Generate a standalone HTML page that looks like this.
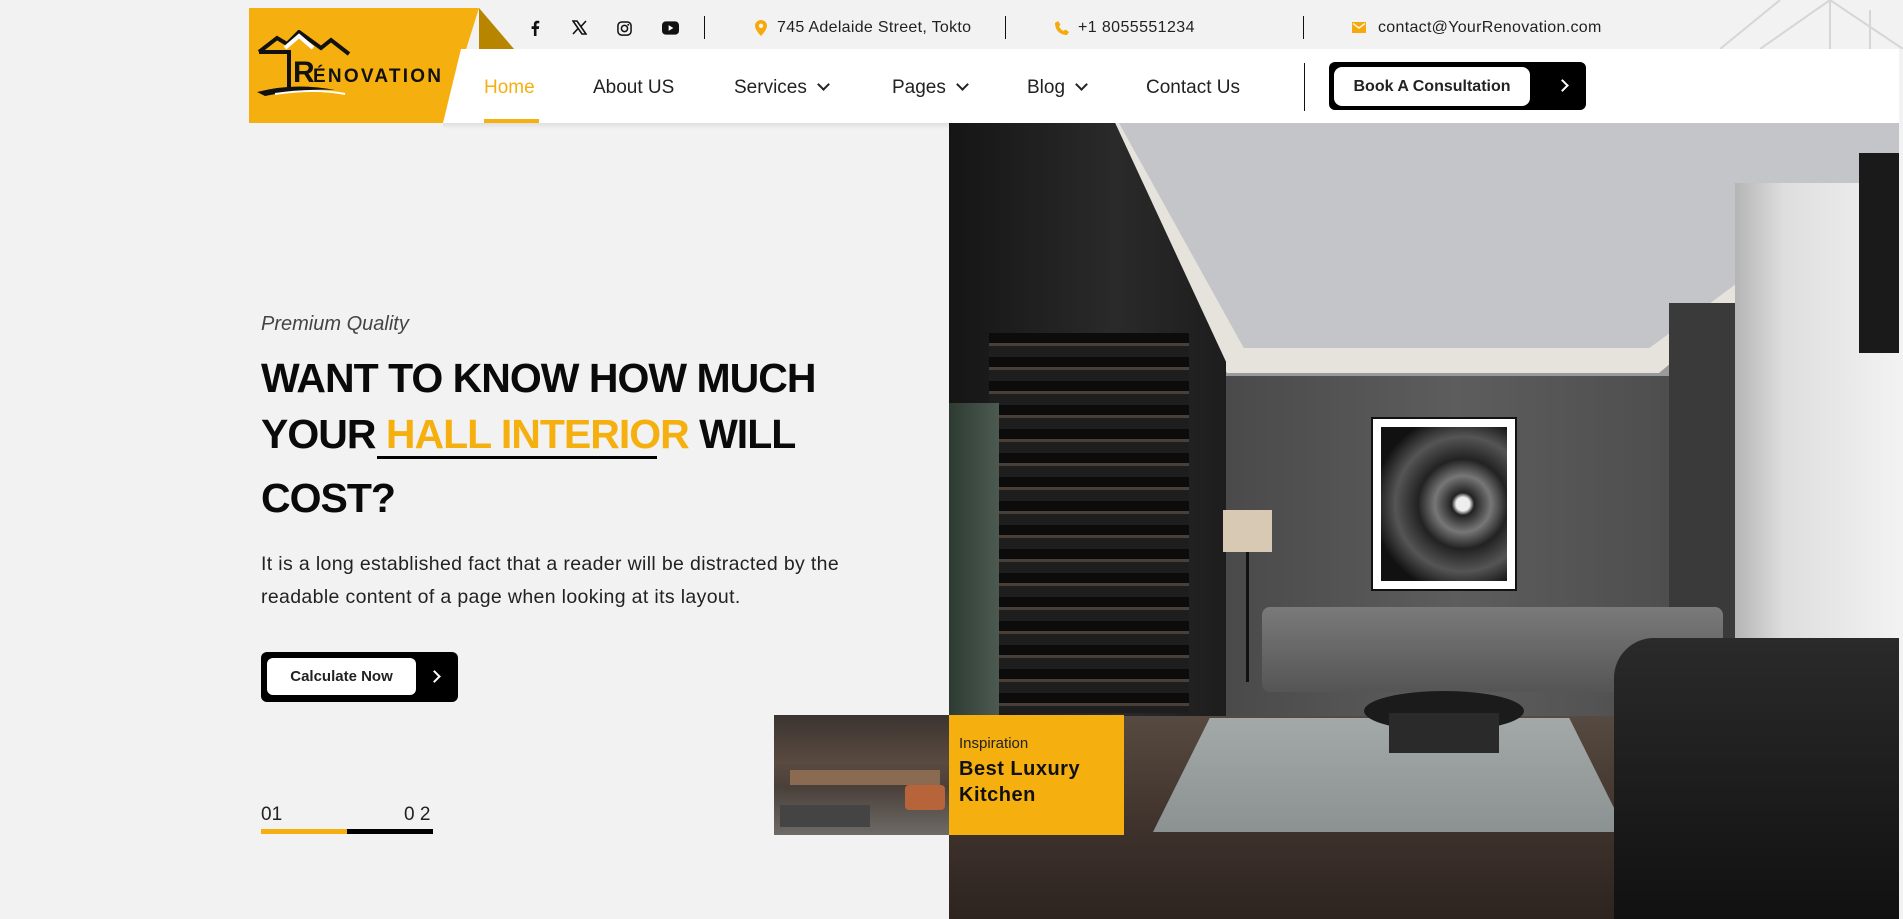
<!DOCTYPE html>
<html><head><meta charset="utf-8"><style>
*{margin:0;padding:0;box-sizing:border-box}
body{width:1903px;height:919px;overflow:hidden;background:#f2f2f2;font-family:"Liberation Sans",sans-serif;position:relative;color:#111}
.a{position:absolute}
.top{font-size:16px;color:#222;top:19px}
.nav{font-size:19px;color:#222;top:77px}
.chev{display:inline-block;width:9px;height:9px;border-right:2px solid #222;border-bottom:2px solid #222;transform:rotate(45deg);margin-left:12px;position:relative;top:-4px}
h1{font-size:41px;font-weight:bold;letter-spacing:-1px;line-height:56px;color:#0a0a0a}
</style></head><body>
<!-- logo -->
<div class="a" style="left:249px;top:8px;width:265px;height:115px;background:#f5b00f;clip-path:polygon(0 0,230px 0,194px 115px,0 115px)"></div>
<div class="a" style="left:479px;top:8px;width:35px;height:41px;background:#b88500;clip-path:polygon(0 0,100% 100%,0 100%)"></div>
<svg class="a" style="left:255px;top:30px" width="200" height="70" viewBox="0 0 200 70">
<path d="M4 22 L22 8 L32 14 L44 2 L66 18 L76 10 L94 24" fill="none" stroke="#111" stroke-width="4"/>
<path d="M30 18 L44 6 L58 18" fill="none" stroke="#fff" stroke-width="4"/>
<path d="M4 22 L34 22 L34 58" fill="none" stroke="#111" stroke-width="4"/>
<path d="M2 62 Q40 52 80 60 Q50 58 10 66 Z" fill="#111"/>
<path d="M20 64 Q60 58 90 64" fill="none" stroke="#fff" stroke-width="2"/>
<text x="38" y="52" font-family="Liberation Sans" font-weight="bold" font-size="30" fill="#111">R</text>
<text x="58" y="52" font-family="Liberation Sans" font-weight="bold" font-size="19" fill="#111" textLength="128">ÉNOVATION</text>
</svg>
<!-- top bar -->
<svg class="a" style="left:528px;top:20px" width="14" height="16" viewBox="0 0 10 16"><path d="M6.5 16V9h2.3l.4-2.7H6.5V4.6c0-.8.3-1.3 1.4-1.3h1.4V.9C9 .8 8.2.7 7.3.7 5.3.7 3.9 1.9 3.9 4.1v2.2H1.6V9h2.3v7z" fill="#111"/></svg>
<svg class="a" style="left:572px;top:20px" width="15" height="15" viewBox="0 0 15 15"><path d="M1 1h4l9 13h-4zM14 1L8.5 7M1 14l5.5-6" stroke="#111" stroke-width="1.6" fill="none"/></svg>
<svg class="a" style="left:617px;top:21px" width="15" height="15" viewBox="0 0 16 16"><rect x="1" y="1" width="14" height="14" rx="4" fill="none" stroke="#111" stroke-width="1.6"/><circle cx="8" cy="8" r="3.3" fill="none" stroke="#111" stroke-width="1.6"/><circle cx="12" cy="4" r="1" fill="#111"/></svg>
<svg class="a" style="left:662px;top:21px" width="17" height="14" viewBox="0 0 18 14"><rect width="18" height="14" rx="4" fill="#111"/><path d="M7 4v6l5-3z" fill="#fff"/></svg>
<div class="a" style="left:704px;top:16px;width:1px;height:23px;background:#111"></div>
<svg class="a" style="left:755px;top:20px" width="12" height="16" viewBox="0 0 12 16"><path d="M6 0C2.7 0 0 2.6 0 5.8 0 10 6 16 6 16s6-6 6-10.2C12 2.6 9.3 0 6 0zm0 8a2.2 2.2 0 110-4.4A2.2 2.2 0 016 8z" fill="#f5a90c"/></svg>
<div class="a top" style="left:777px;letter-spacing:.3px">745 Adelaide Street, Tokto</div>
<div class="a" style="left:1005px;top:16px;width:1px;height:23px;background:#111"></div>
<svg class="a" style="left:1055px;top:21px" width="14" height="14" viewBox="0 0 14 14"><path d="M3 0l2.5 3.5-1.5 2c1 2 2.5 3.5 4.5 4.5l2-1.5L14 11l-2 3C5 14 0 9 0 2z" fill="#f5a90c"/></svg>
<div class="a top" style="left:1078px;letter-spacing:.4px">+1 8055551234</div>
<div class="a" style="left:1303px;top:16px;width:1px;height:23px;background:#111"></div>
<svg class="a" style="left:1352px;top:22px" width="14" height="11" viewBox="0 0 14 11"><rect width="14" height="11" fill="#f5a90c"/><path d="M1 1.5l6 4.5 6-4.5" fill="none" stroke="#fff" stroke-width="1.4"/></svg>
<div class="a top" style="left:1378px;letter-spacing:.3px">contact@YourRenovation.com</div>
<svg class="a" style="left:1720px;top:0" width="183" height="49" viewBox="0 0 183 49"><path d="M0 49L60 0M40 49L110 0M110 0V49M150 10V49M110 0L183 49" stroke="#d6d6d6" stroke-width="2" fill="none"/></svg>
<!-- nav bar -->
<div class="a" style="left:443px;top:49px;width:1456px;height:74px;background:#fff;clip-path:polygon(18px 0,100% 0,100% 100%,0 100%)"></div>
<div class="a" style="left:443px;top:123px;width:1456px;height:6px;background:linear-gradient(rgba(0,0,0,.08),transparent)"></div>
<div class="a nav" style="left:484px;color:#f5b00f">Home</div>
<div class="a" style="left:484px;top:119px;width:55px;height:4px;background:#f5b00f"></div>
<div class="a nav" style="left:593px">About US</div>
<div class="a nav" style="left:734px">Services<span class="chev"></span></div>
<div class="a nav" style="left:892px">Pages<span class="chev"></span></div>
<div class="a nav" style="left:1027px">Blog<span class="chev"></span></div>
<div class="a nav" style="left:1146px">Contact Us</div>
<div class="a" style="left:1304px;top:63px;width:1px;height:48px;background:#111"></div>
<div class="a" style="left:1329px;top:62px;width:257px;height:48px;background:#000;border-radius:6px"></div>
<div class="a" style="left:1334px;top:67px;width:196px;height:39px;background:#fff;border-radius:8px;font-size:16px;font-weight:bold;color:#222;text-align:center;line-height:39px">Book A Consultation</div>
<div class="a" style="left:1558px;top:81px;width:9px;height:9px;border-right:2px solid #fff;border-top:2px solid #fff;transform:rotate(45deg)"></div>
<!-- hero text -->
<div class="a" style="left:261px;top:313px;font-size:20px;font-style:italic;color:#444">Premium Quality</div>
<h1 class="a" style="left:261px;top:350px;width:640px">WANT TO KNOW HOW MUCH<br>YOUR <span style="color:#f5b00f">HALL INTERIOR</span> WILL<br><span style="position:relative;top:8px">COST?</span></h1>
<div class="a" style="left:377px;top:456px;width:280px;height:3px;background:#000"></div>
<div class="a" style="left:261px;top:548px;font-size:19.5px;letter-spacing:.35px;line-height:33px;color:#222;width:700px">It is a long established fact that a reader will be distracted by the<br>readable content of a page when looking at its layout.</div>
<div class="a" style="left:261px;top:652px;width:197px;height:50px;background:#000;border-radius:6px"></div>
<div class="a" style="left:267px;top:658px;width:149px;height:37px;background:#fff;border-radius:6px;font-size:15px;font-weight:bold;color:#222;text-align:center;line-height:37px">Calculate Now</div>
<div class="a" style="left:430px;top:672px;width:9px;height:9px;border-right:2px solid #fff;border-top:2px solid #fff;transform:rotate(45deg)"></div>
<div class="a" style="left:261px;top:804px;font-size:19px;color:#222">01</div>
<div class="a" style="left:404px;top:804px;font-size:19px;color:#222">0 2</div>
<div class="a" style="left:261px;top:829px;width:86px;height:5px;background:#f5b00f"></div>
<div class="a" style="left:347px;top:829px;width:86px;height:5px;background:#000"></div>
<!-- hero image -->
<div class="a" style="left:949px;top:123px;width:950px;height:796px;overflow:hidden;background:#1c1c1c">
 <div class="a" style="left:0;top:0;width:950px;height:260px;background:linear-gradient(#7e7f82,#9a9b9d)"></div>
 <div class="a" style="left:150px;top:0;width:800px;height:250px;background:#e6e2dc;clip-path:polygon(0 0,100% 0,100% 20%,70% 100%,16% 100%)"></div>
 <div class="a" style="left:170px;top:0;width:780px;height:225px;background:#c4c5c8;clip-path:polygon(0 0,100% 0,100% 18%,68% 100%,16% 100%)"></div>
 <div class="a" style="left:277px;top:253px;width:460px;height:345px;background:linear-gradient(90deg,#4a4a4a,#5d5d5d,#4d4d4d)"></div>
 <div class="a" style="left:0;top:0;width:277px;height:796px;background:linear-gradient(90deg,#151515,#2a2a2a 60%,#1d1d1d);clip-path:polygon(0 0,60% 0,100% 30%,100% 100%,0 100%)"></div>
 <div class="a" style="left:40px;top:210px;width:200px;height:380px;background:repeating-linear-gradient(180deg,#0c0c0c 0 10px,#4a4038 10px 13px,#1e1e1e 13px 24px)"></div>
 <div class="a" style="left:0;top:280px;width:50px;height:330px;background:linear-gradient(90deg,#2d3b33,#4d5a52)"></div>
 <div class="a" style="left:720px;top:180px;width:70px;height:440px;background:#3a3a3a"></div>
 <div class="a" style="left:786px;top:60px;width:164px;height:580px;background:linear-gradient(90deg,#b5b5b5,#dedede 30%,#f2f2f2)"></div>
 <div class="a" style="left:910px;top:30px;width:40px;height:200px;background:#1a1a1a"></div>
 <div class="a" style="left:0;top:593px;width:950px;height:203px;background:linear-gradient(#574a40,#3c302a 60%,#2d2420)"></div>
 <div class="a" style="left:204px;top:595px;width:473px;height:114px;background:linear-gradient(#a3a9a8,#8c9291);clip-path:polygon(12% 0,88% 0,100% 100%,0 100%)"></div>
 <div class="a" style="left:313px;top:484px;width:461px;height:85px;background:linear-gradient(#7a7a7a,#555);border-radius:8px"></div>
 <div class="a" style="left:415px;top:568px;width:160px;height:40px;background:#1b1b1b;border-radius:50%"></div>
 <div class="a" style="left:440px;top:590px;width:110px;height:40px;background:#2a2a2a"></div>
 <div class="a" style="left:665px;top:515px;width:290px;height:281px;background:linear-gradient(#2a2a2a,#111);border-radius:40px 0 0 0"></div>
 <div class="a" style="left:422px;top:294px;width:146px;height:174px;background:#fff;border:2px solid #111"></div>
 <div class="a" style="left:432px;top:304px;width:126px;height:154px;background:radial-gradient(circle at 65% 50%,#eee 0 6%,#222 10%,#777 25%,#222 40%,#555 60%,#111 80%)"></div>
 <div class="a" style="left:274px;top:387px;width:49px;height:42px;background:#d8c9b5"></div>
 <div class="a" style="left:297px;top:429px;width:3px;height:130px;background:#111"></div>
</div>
<!-- inspiration card -->
<div class="a" style="left:774px;top:715px;width:175px;height:120px;background:linear-gradient(180deg,#3b3430 0,#5a4a40 40%,#4a403a 60%,#6e6a66 100%)"></div>
<div class="a" style="left:790px;top:770px;width:150px;height:15px;background:#8a6a50"></div>
<div class="a" style="left:780px;top:805px;width:90px;height:22px;background:#444"></div>
<div class="a" style="left:905px;top:785px;width:40px;height:25px;background:#b8643a;border-radius:4px"></div>
<div class="a" style="left:949px;top:715px;width:175px;height:120px;background:#f5b00f"></div>
<div class="a" style="left:959px;top:735px;font-size:15px;color:#222">Inspiration</div>
<div class="a" style="left:959px;top:756px;font-size:20px;font-weight:bold;line-height:26px;letter-spacing:.5px;color:#111">Best Luxury<br>Kitchen</div>
</body></html>
